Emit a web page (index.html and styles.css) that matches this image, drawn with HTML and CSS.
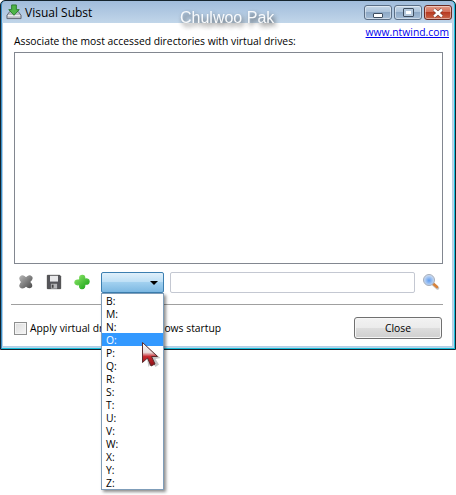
FILE: index.html
```html
<!DOCTYPE html>
<html lang="en">
<head>
<meta charset="utf-8">
<title>Visual Subst</title>
<link rel="stylesheet" href="styles.css">
</head>
<body>
<div class="window">
  <div class="titlebar">
    <svg class="app-icon" width="16" height="16" viewBox="0 0 17 17">
      <path d="M1 12l3-4h9l3 4v3.500H1z" fill="#b9bcc4" stroke="#5d6470"/>
      <path d="M2 12.500h13" stroke="#fff"/>
      <path d="M6 1h5v5h3l-5.500 6L3 6h3z" fill="#4fb548" stroke="#2a7a2c"/>
    </svg>
    <span class="title">Visual Subst</span>
    <div class="caption-buttons">
      <div class="cap cap-min"><span class="glyph-min"></span></div>
      <div class="cap cap-max"><span class="glyph-max"></span></div>
      <div class="cap cap-close">
        <svg width="14" height="10" viewBox="0 0 14 10"><path d="M3 1.500l8 7M11 1.500l-8 7" stroke="#5a2a22" stroke-width="3.400" fill="none"/><path d="M3 1.500l8 7M11 1.500l-8 7" stroke="#fff" stroke-width="2.400" fill="none"/></svg>
      </div>
    </div>
  </div>
  <div class="client">
    <div class="head-row">
      <span class="label">Associate the most accessed directories with virtual drives:</span>
      <a class="link" href="#">www.ntwind.com</a>
    </div>
    <div class="listbox"></div>
    <div class="toolbar">
      <svg class="tool tool-first" width="16" height="16" viewBox="0 0 18 18">
        <defs><linearGradient id="gx" x1="0" y1="0" x2="1" y2="1"><stop offset="0" stop-color="#b0b0b0"/><stop offset="1" stop-color="#4e4e4e"/></linearGradient></defs>
        <path d="M3 3.500c2-2 3.500-1 6 1.500 2.500-2.500 4-3.500 6-1.500 1.500 2 0 3.500-2.500 5.500 2.500 2.500 3.500 4 2 5.500-2 1.500-3.500.5-5.500-1.500-2.500 2.500-4 3.500-6 1.500-1.500-2-.5-3.500 2-5.500-2.500-2-3.500-3.500-2-5.500z" fill="url(#gx)" stroke="url(#gx)" stroke-width="2"/>
      </svg>
      <svg class="tool" width="16" height="16" viewBox="0 0 18 18">
        <path d="M1.500 1.500h14l1 1v14h-15z" fill="#55555a" stroke="#444"/>
        <rect x="4.500" y="2" width="9" height="6.500" fill="#e8e8ea"/>
        <rect x="5.500" y="11" width="7" height="5.500" fill="#b5b5b8"/>
        <rect x="6.500" y="12" width="2" height="3.500" fill="#444"/>
      </svg>
      <svg class="tool" width="16" height="16" viewBox="0 0 18 18">
        <defs><linearGradient id="gp" x1="0" y1="0" x2="1" y2="1"><stop offset="0" stop-color="#8fe86a"/><stop offset="1" stop-color="#14a014"/></linearGradient></defs>
        <path d="M6.500 3.500c0-2 5-3 5.500 0v2.500c3-1 5 0 5 2.500s-2 3.500-5 2.800c.5 3-.5 5.200-3 5.200s-3-2-2.500-4.700C3.500 13 1 11.500 1 9.500s2.500-3.200 5.500-3z" fill="url(#gp)" stroke="url(#gp)" stroke-width="1.400"/>
      </svg>
      <div class="combo"><span class="combo-arrow"></span></div>
      <div class="edit"></div>
      <svg class="search" width="18" height="18" viewBox="0 0 18 18">
        <defs><radialGradient id="gs" cx=".5" cy=".55" r=".6"><stop offset="0" stop-color="#5f9df0"/><stop offset=".55" stop-color="#a9c8f2"/><stop offset="1" stop-color="#e4e8ee"/></radialGradient></defs>
        <path d="M11 11l4.500 4" stroke="#8a8a8a" stroke-width="3.400" stroke-linecap="round" opacity=".5"/>
        <path d="M11 10.500l4 3.500" stroke="#d9833a" stroke-width="2.600" stroke-linecap="round"/>
        <circle cx="7" cy="7" r="5.500" fill="url(#gs)" stroke="#a5adba"/>
      </svg>
    </div>
    <div class="separator"></div>
    <div class="footer">
      <label class="check-row"><span class="checkbox"></span><span class="check-label">Apply virtual drives on Windows startup</span></label>
      <button class="close-btn" type="button">Close</button>
    </div>
  </div>
  <span class="watermark">Chulwoo Pak</span>
  <ul class="dropdown">
    <li>B:</li><li>M:</li><li>N:</li><li class="selected">O:</li><li>P:</li><li>Q:</li><li>R:</li><li>S:</li><li>T:</li><li>U:</li><li>V:</li><li>W:</li><li>X:</li><li>Y:</li><li>Z:</li>
  </ul>
  <svg class="cursor" width="24" height="30" viewBox="0 0 24 30">
    <defs><linearGradient id="gc" x1="0" y1="0" x2="0" y2="1"><stop offset="0" stop-color="#fff"/><stop offset=".42" stop-color="#e8dcdc"/><stop offset=".6" stop-color="#c8262c"/><stop offset="1" stop-color="#8e1116"/></linearGradient></defs>
    <path d="M3.500 3.500l4 22.500 3.500-5 3.500 5 3.500-2.500-3.500-5.500 5-1z" fill="#555" opacity=".35"/>
    <path d="M1.500 1.500v20l5-4.500 3.500 8 4-2-3.500-7.500h6z" fill="url(#gc)" stroke="#5b2a2c" stroke-width="1"/>
  </svg>
</div>
</body>
</html>
```
FILE: styles.css
```css
* { box-sizing: border-box; }
html, body { margin: 0; padding: 0; background: #fff; }
body { width: 456px; height: 495px; font-family: "Open Sans", "Liberation Sans", sans-serif; font-size: 10.33px; color: #000; }
.window { position: relative; width: 456px; height: 350px; display: flex; flex-direction: column; border: 1px solid #14232c; border-radius: 5px 5px 0 0; background: linear-gradient(#a0bcdb, #c3d7ea 23px, #b9d7ea); box-shadow: inset 1px 0 0 #3a8fc8, inset -1px 0 0 #18bedc, inset 0 -1px 0 #18bedc; }
.titlebar { position: relative; height: 22px; flex: none; display: flex; align-items: center; padding-left: 5px; }
.app-icon { flex: none; margin-right: 3px; }
.title { font-size: 12px; color: #000; }
.caption-buttons { position: absolute; top: 4px; right: 3px; display: flex; gap: 2px; }
.cap { width: 28px; height: 15px; display: flex; align-items: center; justify-content: center; border: 1px solid #5b6f86; border-radius: 3px; box-shadow: inset 0 0 0 1px rgba(255,255,255,.45); background: linear-gradient(#c6d7e8, #a9c0d8 50%, #8ea9c6 50%, #a5bdd6); }
.cap-close { border-color: #6a2a22; background: linear-gradient(#e39a86, #d06a55 50%, #b83a22 50%, #c8654a); }
.glyph-min { width: 10px; height: 5px; background: #fff; border: 1px solid #3f4e60; border-radius: 1px; margin-top: 5px; }
.glyph-max { width: 11px; height: 9px; border: 1px solid #3f4e60; border-radius: 1px; background: #fff; box-shadow: inset 0 0 0 2px #b4c8dc; }
.client { flex: 1; margin: 0 2px 2px 1px; background: #fff; padding: 0 9px 0 11px; display: flex; flex-direction: column; border: 1px solid #b4cfe6; border-top: 0; }
.head-row { height: 29px; flex: none; display: flex; justify-content: space-between; }
.label { padding-top: 11px; line-height: 15px; white-space: nowrap; }
.link { padding-top: 2px; margin-right: -6px; color: #0000ee; line-height: 15px; white-space: nowrap; }
.listbox { height: 212px; flex: none; border: 1px solid #828790; background: #fff; }
.toolbar { height: 40px; flex: none; display: flex; align-items: flex-start; padding-top: 8px; }
.tool { flex: none; margin: 2px 12px 0 0; filter: blur(.3px); }
.tool-first { margin-left: 4px; }
.combo { position: relative; width: 63px; height: 21px; margin-left: -1px; border: 1px solid #3c7fb1; border-radius: 2px; background: linear-gradient(#e0f0fb, #bfe0f6 45%, #a1d0ef 50%, #7cb8e2); flex: none; }
.combo-arrow { position: absolute; right: 5px; top: 8px; width: 0; height: 0; border: 4px solid transparent; border-top-color: #000; border-bottom: 0; }
.edit { width: 245px; height: 21px; margin-left: 6px; border: 1px solid #c4c8d2; border-radius: 2px; background: #fff; flex: none; }
.search { margin: 1px 0 0 7px; flex: none; }
.separator { height: 1px; flex: none; background: #a0a0a0; margin-left: -3px; }
.footer { flex: 1; display: flex; align-items: flex-start; justify-content: space-between; }
.check-row { display: flex; align-items: center; margin-top: 15px; }
.checkbox { width: 13px; height: 13px; margin-right: 3px; border: 1px solid #8e8f8f; background: linear-gradient(135deg, #dcdcdc, #f6f6f6); box-shadow: inset 0 0 0 1px #f4f4f4; }
.check-label { line-height: 15px; padding-top: 1px; }
.close-btn { width: 88px; height: 22px; margin: 12px 1px 0 0; padding: 0; border: 1px solid #707070; border-radius: 3px; font-family: inherit; font-size: 10.33px; background: linear-gradient(#f2f2f2, #ebebeb 50%, #dddddd 50%, #cfcfcf); box-shadow: inset 0 0 0 1px #f6f6f6; color: #000; }
.watermark { position: absolute; left: 179px; top: 8px; font-family: "Liberation Sans", sans-serif; font-size: 16px; color: #fff; text-shadow: 2px 3px 5px #333; opacity: .9; }
.dropdown { position: absolute; left: 100px; top: 292px; width: 63px; height: 197px; margin: 0; padding: 0; list-style: none; background: #fff; border: 1px solid #7f9db9; box-shadow: 2px 2px 3px rgba(0,0,0,.45); }
.dropdown li { height: 13px; line-height: 15px; padding-left: 4px; }
.dropdown .selected { background: #3399ff; color: #fff; }
.cursor { position: absolute; left: 140px; top: 340px; }
```
